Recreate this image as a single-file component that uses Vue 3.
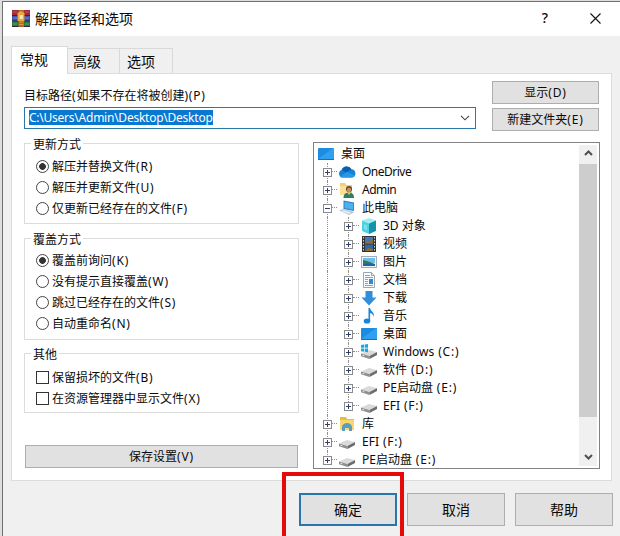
<script setup>
import { ref } from 'vue'

const path = 'C:\\Users\\Admin\\Desktop\\Desktop'
const updateModes = ['解压并替换文件(R)', '解压并更新文件(U)', '仅更新已经存在的文件(F)']
const overwriteModes = ['覆盖前询问(K)', '没有提示直接覆盖(W)', '跳过已经存在的文件(S)', '自动重命名(N)']
const otherOptions = ['保留损坏的文件(B)', '在资源管理器中显示文件(X)']
const update = ref(0)
const overwrite = ref(0)

// Splits off the trailing access key or drive letter so it can be spaced separately.
const stem = (t) => t.replace(/\s?\([A-Z]:?\)$/, '')
const suffix = (t) => t.slice(stem(t).length)

const nodes = [
  { level: 0, icon: 'desktop', text: '桌面' },
  { level: 1, icon: 'cloud', text: 'OneDrive', narrow: true },
  { level: 1, icon: 'user', text: 'Admin', narrow: true },
  { level: 1, icon: 'pc', text: '此电脑', open: true },
  { level: 2, icon: 'cube', text: '3D 对象' },
  { level: 2, icon: 'video', text: '视频' },
  { level: 2, icon: 'image', text: '图片' },
  { level: 2, icon: 'doc', text: '文档' },
  { level: 2, icon: 'down', text: '下载' },
  { level: 2, icon: 'music', text: '音乐' },
  { level: 2, icon: 'desktop', text: '桌面' },
  { level: 2, icon: 'windrive', text: 'Windows (C:)' },
  { level: 2, icon: 'drive', text: '软件 (D:)' },
  { level: 2, icon: 'drive', text: 'PE启动盘 (E:)' },
  { level: 2, icon: 'drive', text: 'EFI (F:)', last: true },
  { level: 1, icon: 'library', text: '库' },
  { level: 1, icon: 'drive', text: 'EFI (F:)' },
  { level: 1, icon: 'drive', text: 'PE启动盘 (E:)' },
]
</script>

<template>
  <div class="screen">
    <div class="window">
      <header class="titlebar">
        <svg class="app-icon" width="18" height="17" viewBox="0 0 18 17">
          <rect width="18" height="5.5" fill="#a32a38" />
          <rect y="5.5" width="18" height="5.5" fill="#3c4fae" />
          <rect y="11" width="18" height="6" fill="#2c7a3a" />
          <path d="M0 5.500h18M0 11h18M0 16.500h18" stroke="#33263a" />
          <path d="M1 2h4M13 2h4" stroke="#d0505c" />
          <path d="M1 8h4M13 8h4" stroke="#7690dc" />
          <path d="M1 14h4M13 14h4" stroke="#57a856" />
          <rect x="6.500" width="5.500" height="17" fill="#b5652d" />
          <path d="M5.500 3l3.500-2 3.500 2v8h-7z" fill="#e6a93a" />
          <rect x="7.500" y="5" width="3.500" height="4" fill="#f6e3a8" />
          <path d="M7 12h4.500M7 14.500h4.500" stroke="#d99b45" />
        </svg>
        <h1>解压路径和选项</h1>
        <span class="help">?</span>
        <svg class="close" width="11" height="11" viewBox="0 0 11 11"><path d="M.5.5l10 10M10.500.5l-10 10" stroke="#111" stroke-width="1.1" fill="none" /></svg>
      </header>

      <nav class="tabs">
        <span class="tab active">常规</span>
        <span class="tab">高级</span>
        <span class="tab last">选项</span>
      </nav>

      <main class="panel">
        <section class="destination">
          <div class="dest-field">
            <label>目标路径<span class="key">(</span>如果不存在将被创建<span class="key">)(P)</span></label>
            <div class="combo">
              <span class="selected">{{ path }}</span>
              <svg width="10" height="6" viewBox="0 0 10 6"><path d="M1 .8l4 4 4-4" stroke="#444" stroke-width="1.1" fill="none" /></svg>
            </div>
          </div>
          <div class="dest-buttons">
            <button>显示<span class="key">(D)</span></button>
            <button>新建文件夹<span class="key">(E)</span></button>
          </div>
        </section>

        <section class="columns">
          <div class="options">
            <div class="group g1">
              <span class="legend">更新方式</span>
              <div v-for="(t, i) in updateModes" :key="t" class="choice" @click="update = i">
                <i class="radio" :class="{ on: update === i }"></i><span>{{ stem(t) }}<span class="key">{{ suffix(t) }}</span></span>
              </div>
            </div>
            <div class="group g2">
              <span class="legend">覆盖方式</span>
              <div v-for="(t, i) in overwriteModes" :key="t" class="choice" @click="overwrite = i">
                <i class="radio" :class="{ on: overwrite === i }"></i><span>{{ stem(t) }}<span class="key">{{ suffix(t) }}</span></span>
              </div>
            </div>
            <div class="group g3">
              <span class="legend">其他</span>
              <div v-for="t in otherOptions" :key="t" class="choice">
                <i class="check"></i><span>{{ stem(t) }}<span class="key">{{ suffix(t) }}</span></span>
              </div>
            </div>
            <button class="save">保存设置<span class="key">(V)</span></button>
          </div>

          <div class="tree">
            <div class="nodes">
              <div v-for="(n, i) in nodes" :key="i" class="node" :class="'level' + n.level">
                <span v-if="n.level === 2" class="rail"></span>
                <span v-if="n.level > 0" class="branch" :class="{ end: n.last }">
                  <svg class="expander" width="9" height="9" viewBox="0 0 9 9">
                    <rect x=".5" y=".5" width="8" height="8" fill="#fff" stroke="#8a8a8a" />
                    <path :d="n.open ? 'M2 4.5h5' : 'M2 4.5h5M4.500 2v5'" stroke="#34406c" />
                  </svg>
                </span>
                <svg class="icon" width="18" height="16" viewBox="0 0 18 16">
                  <g v-if="n.icon === 'desktop'">
                    <rect x="1" y="2" width="16" height="12" rx="1" fill="#1c8be0" />
                    <path d="M1 13L16 2h1v11z" fill="#2f9ff0" />
                    <path d="M1 13.500h16" stroke="#1470bd" />
                  </g>
                  <g v-else-if="n.icon === 'cloud'">
                    <path d="M4 13.500a3.900 3.900 0 0 1-.3-7.500A5.500 5.500 0 0 1 13.500 5.200 4.200 4.200 0 0 1 14 13.500z" fill="#1583d8" />
                    <path d="M3.700 6A5.500 5.500 0 0 1 13.500 5.200L8 8.500z" fill="#0d5fae" />
                    <path d="M2 13l7-5 8 3.500a3 3 0 0 1-3 2H4z" fill="#2499e8" />
                  </g>
                  <g v-else-if="n.icon === 'user'">
                    <path d="M2 1h5l1 2h6v10H2z" fill="#f4d06a" />
                    <path d="M2 4h7v9H2z" fill="#fbe195" />
                    <circle cx="11" cy="7" r="3.100" fill="#6a4b2d" />
                    <circle cx="11" cy="8" r="2.200" fill="#c98f64" />
                    <path d="M5.500 16c0-4 2-5.200 5.500-5.200s5 1.400 5 5.200z" fill="#347c63" />
                    <path d="M10 11l1 2 1-2z" fill="#eee" />
                  </g>
                  <g v-else-if="n.icon === 'pc'">
                    <path d="M5.500.5l10.500 2v8.500L5.500 9z" fill="#2f80c4" />
                    <path d="M6.500 1.800l8.700 1.600v6.300L6.500 8z" fill="#4bb2f2" />
                    <path d="M1 10.500l4.500-1.500 11 3-5.500 3z" fill="#b5c7d8" />
                    <path d="M3 11l3-.7 7 2.200-2 1.500z" fill="#e5edf4" />
                  </g>
                  <g v-else-if="n.icon === 'cube'">
                    <path d="M9 0l7 2.500-7 3-7-3z" fill="#a2edf2" />
                    <path d="M2 2.500l7 3V16l-7-3z" fill="#4fd0dc" />
                    <path d="M16 2.500l-7 3V16l7-3z" fill="#1493ad" />
                    <path d="M4 6l3 1.500v5L4 11z" fill="#79e2e8" />
                  </g>
                  <g v-else-if="n.icon === 'video'">
                    <rect x="2" width="14" height="16" fill="#343434" />
                    <path d="M3.500 1v15M14.500 1v15" stroke="#d2d2d2" stroke-dasharray="1.500 1.500" />
                    <rect x="5" y="1" width="8" height="6.500" fill="#3f78bd" />
                    <rect x="5" y="8.500" width="8" height="6.500" fill="#2e67ae" />
                    <path d="M5 7.500l3-3 2 1 3-2v4zM5 15l3-3 5 1v2z" fill="#946c2e" />
                  </g>
                  <g v-else-if="n.icon === 'image'">
                    <rect x="1.500" y="2.500" width="15" height="11" fill="#eef7ff" stroke="#a3adb5" />
                    <path d="M3 4h12v5H3z" fill="#69bff0" />
                    <path d="M3 6l4 1 8 3v2H3z" fill="#3c7655" />
                    <path d="M3 10l6-.5 6 1V12H3z" fill="#2463a0" />
                  </g>
                  <g v-else-if="n.icon === 'doc'">
                    <path d="M3.500.5h8l3 3v12h-11z" fill="#f7fbff" stroke="#9ba6b0" />
                    <path d="M11.500.5v3h3" fill="#ddd" stroke="#9ba6b0" />
                    <path d="M5 3.500h5M5 5.500h8M5 11.500h3M5 13.500h8" stroke="#73a9d4" />
                    <path d="M9 7h4v5H9z" fill="#338ad0" />
                    <path d="M5 7.500h3M5 9.500h3" stroke="#73a9d4" />
                  </g>
                  <path v-else-if="n.icon === 'down'" d="M5.500 1h7v6.500h4L9 15.500 1.500 7.500h4z" fill="#318edb" />
                  <g v-else-if="n.icon === 'music'">
                    <ellipse cx="7" cy="13" rx="3.300" ry="2.600" fill="#1685da" />
                    <path d="M8.500 13V0h1.600c.3 3.500 4.900 4 3.700 9-.6-2.600-1.700-3.500-3.700-4v8z" fill="#1685da" />
                  </g>
                  <g v-else-if="n.icon === 'library'">
                    <path d="M2 1h6l1 2h7v11H2z" fill="#edbb42" />
                    <path d="M2 4h14v10H2z" fill="#f9d76f" />
                    <path d="M4 15V11a5 4 0 0 1 10 0v4h-3v-3H7v3z" fill="#5c9dbd" />
                  </g>
                  <g v-else>
                    <path d="M1 9.500l8-3.500 8 2-7.500 4z" fill="#dadada" />
                    <path d="M1 9.500l8.500 2.500v3L1 12.300z" fill="#8f8f8f" />
                    <path d="M9.500 12L17 8v3l-7.500 4z" fill="#6c6c6c" />
                    <path d="M2.500 11.300l1.800.5" stroke="#dff4df" />
                    <g v-if="n.icon === 'windrive'" fill="#19a8e6">
                      <path d="M1 1l3-.5v3.200H1zM4.700.4L8 0v3.700H4.700zM1 4.400h3v3.300l-3-.4zM4.700 4.400H8v3.800l-3.300-.4z" />
                    </g>
                  </g>
                </svg>
                <span class="name" :class="{ narrow: n.narrow }">{{ stem(n.text) }}<span class="drive-letter">{{ suffix(n.text) }}</span></span>
              </div>
            </div>
            <div class="scrollbar">
              <svg width="9" height="6" viewBox="0 0 9 6"><path d="M1 5l3.500-3.500L8 5" stroke="#505050" stroke-width="2" fill="none" /></svg>
              <div class="thumb"></div>
              <svg class="arrow-down" width="9" height="6" viewBox="0 0 9 6"><path d="M1 1l3.500 3.500L8 1" stroke="#505050" stroke-width="2" fill="none" /></svg>
            </div>
          </div>
        </section>
      </main>

      <footer class="actions">
        <button class="primary">确定</button>
        <button>取消</button>
        <button>帮助</button>
      </footer>
    </div>
    <div class="highlight"></div>
  </div>
</template>

<style>
body { margin: 0; overflow: hidden; }
</style>

<style scoped>
* { box-sizing: border-box; }
.screen { position: relative; width: 620px; height: 536px; padding: 1px 0 0 2px; overflow: hidden; background: #dedede; color: #0a0a0a; font: 12px/18px "Noto Sans", "Noto Sans CJK SC", sans-serif; }
.window { height: 535px; border-top: 1px solid #707070; border-left: 1px solid #707070; background: #f0f0f0; }
.titlebar { display: flex; align-items: center; height: 34px; padding: 0 19px 2px 9px; background: #fff; }
h1 { margin: 0 auto 0 5px; padding-top: 1px; font-size: 14px; font-weight: 400; line-height: 20px; }
.help { margin-right: 42px; font-size: 14px; font-weight: 500; }
.tabs { display: flex; align-items: flex-end; height: 37px; padding-left: 8px; font-size: 14px; line-height: 20px; }
.tab { height: 25px; width: 52px; padding: 3px 0 0 5px; border: 1px solid #d9d9d9; border-left: 0; border-bottom: 0; }
.tab.last { width: 53px; padding-left: 7px; }
.tab.active { position: relative; z-index: 1; width: 57px; height: 28px; margin-bottom: -1px; padding: 3px 0 0 8px; border-left: 1px solid #d9d9d9; background: #fff; }
.panel { width: 601px; height: 408px; margin-left: 8px; padding: 7px 11px 0 12px; border: 1px solid #dcdcdc; background: #fff; }
.destination { display: flex; justify-content: space-between; padding-right: 1px; }
.dest-field { width: 452px; padding-top: 6px; }
label { display: block; height: 20px; }
.key { letter-spacing: .8px; }
.combo { display: flex; align-items: center; justify-content: space-between; height: 22px; padding: 0 5px 1px 4px; border: 1px solid #2878a8; }
.selected { height: 15px; background: #0878d0; color: #fff; line-height: 15px; letter-spacing: -.24px; }
.dest-buttons { display: flex; flex-direction: column; gap: 4px; }
button { display: flex; align-items: center; justify-content: center; width: 107px; height: 23px; margin: 0; padding: 0; border: 1px solid #adadad; background: #e1e1e1; color: #0a0a0a; font: inherit; }
.columns { display: flex; justify-content: space-between; padding-top: 11px; }
.options { width: 275px; }
.group { padding: 0 0 0 11px; border: 1px solid #dcdcdc; }
.g1 { height: 81px; margin-top: 1px; }
.g2 { height: 102px; margin-top: 14px; }
.g3 { height: 60px; margin-top: 13px; }
.legend { display: block; width: max-content; height: 18px; margin: -8px 0 2px -5px; padding: 0 2px; background: #fff; }
.g2 .legend { margin-bottom: 1px; }
.g3 .legend { margin-bottom: 3px; }
.choice { display: flex; align-items: center; height: 21px; gap: 3px; }
.radio { width: 13px; height: 13px; border: 1px solid #444; border-radius: 50%; background: #fff; }
.radio.on { background: radial-gradient(circle, #333 0 3px, #fff 3.700px); }
.check { width: 13px; height: 13px; border: 1px solid #333; }
.save { width: 273px; margin: 32px 0 0 1px; }
.tree { display: flex; justify-content: space-between; width: 287px; height: 327px; padding: 2px; border: 1px solid #828282; }
.nodes { flex: 1; }
.node { display: flex; align-items: center; height: 18px; }
.level0 { padding-left: 1px; }
.rail { width: 21px; height: 18px; margin-left: 11px; margin-right: -11px; border-left: 1px dotted #909090; }
.branch { position: relative; display: flex; align-items: center; width: 22px; height: 18px; padding-left: 7px; flex: none; }
.level2 .branch { width: 23px; }
.branch::before { content: ""; position: absolute; left: 11px; top: 0; height: 18px; border-left: 1px dotted #909090; }
.branch.end::before { height: 9px; }
.node:last-child .branch::before { height: 14px; }
.branch::after { content: ""; position: absolute; left: 16px; right: 1px; top: 8px; border-top: 1px dotted #909090; }
.expander { position: relative; z-index: 1; }
.icon { flex: none; margin-right: 6px; }
.level2 .icon { margin-right: 5px; }
.name { white-space: nowrap; }
.name.narrow { letter-spacing: -.5px; }
.drive-letter { letter-spacing: .8px; }
.scrollbar { display: flex; flex-direction: column; align-items: center; width: 18px; padding: 5px 0 6px; background: #f0f0f0; }
.thumb { width: 18px; height: 253px; margin-top: 8px; background: #cdcdcd; }
.arrow-down { margin-top: auto; }
.actions { display: flex; gap: 10px; padding: 12px 0 0 296px; }
.actions button { width: 98px; height: 33px; font-size: 14px; }
.actions .primary { border: 2px solid #2777ad; }
.highlight { position: absolute; left: 282px; top: 472px; width: 122px; height: 70px; border: 4px solid #e60b0b; }
</style>
